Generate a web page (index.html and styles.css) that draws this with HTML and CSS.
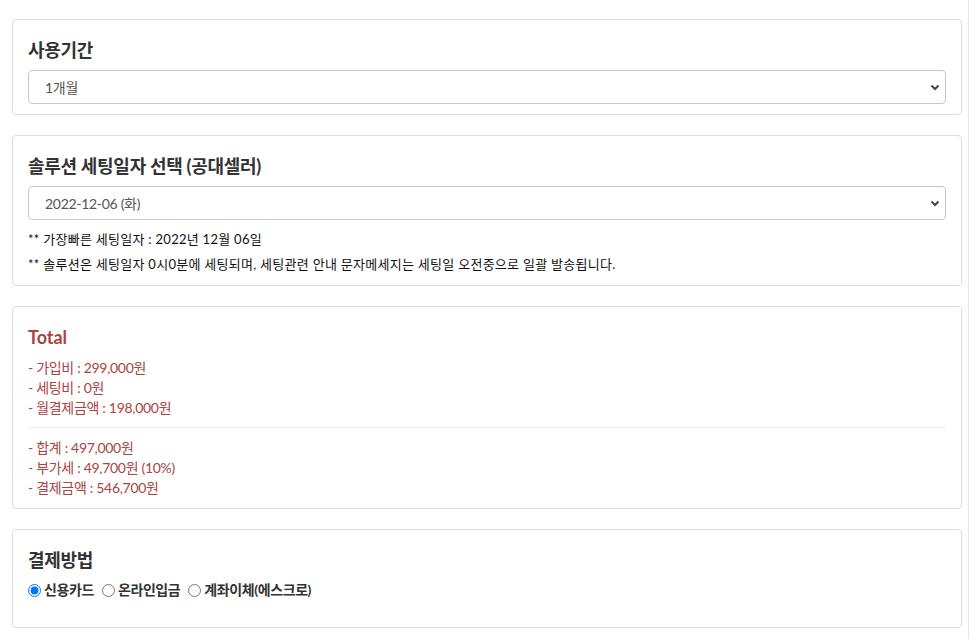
FILE: index.html
```html
<!DOCTYPE html>
<html lang="ko">
<head>
<meta charset="utf-8">
<title>결제</title>
<link rel="stylesheet" href="styles.css">
</head>
<body>
<div class="page">
  <section class="card card-a">
    <h3 class="card-title">사용기간</h3>
    <div class="select-wrap">
      <select class="select">
        <option>1개월</option>
      </select>
      <svg class="chev" width="10" height="7" viewBox="0 0 10 7"><polyline points="1.5,1.5 5,5 8.5,1.5" fill="none" stroke="#444" stroke-width="2"/></svg>
    </div>
  </section>

  <section class="card card-b">
    <h3 class="card-title">솔루션 세팅일자 선택 (공대셀러)</h3>
    <div class="select-wrap">
      <select class="select">
        <option>2022-12-06 (화)</option>
      </select>
      <svg class="chev" width="10" height="7" viewBox="0 0 10 7"><polyline points="1.5,1.5 5,5 8.5,1.5" fill="none" stroke="#444" stroke-width="2"/></svg>
    </div>
    <div class="notes">
      <p class="note">** 가장빠른 세팅일자 : 2022년 12월 06일</p>
      <p class="note">** 솔루션은 세팅일자 0시0분에 세팅되며, 세팅관련 안내 문자메세지는 세팅일 오전중으로 일괄 발송됩니다.</p>
    </div>
  </section>

  <section class="card card-c">
    <h3 class="card-title total-title">Total</h3>
    <ul class="sum">
      <li>- 가입비 : 299,000원</li>
      <li>- 세팅비 : 0원</li>
      <li>- 월결제금액 : 198,000원</li>
    </ul>
    <hr class="divider">
    <ul class="sum">
      <li>- 합계 : 497,000원</li>
      <li>- 부가세 : 49,700원 (10%)</li>
      <li>- 결제금액 : 546,700원</li>
    </ul>
  </section>

  <section class="card card-d">
    <h3 class="card-title">결제방법</h3>
    <div class="radios">
      <label class="radio"><input type="radio" name="pay" checked>신용카드</label>
      <label class="radio"><input type="radio" name="pay">온라인입금</label>
      <label class="radio"><input type="radio" name="pay">계좌이체(에스크로)</label>
    </div>
  </section>
</div>
</body>
</html>
```

FILE: styles.css
```css
* { box-sizing: border-box; }

html, body {
  margin: 0;
  padding: 0;
  background: #fff;
}

body {
  font-family: Lato, "Noto Sans CJK KR", sans-serif;
  font-size: 14px;
  color: #333;
}

.page {
  width: 969px;
  min-height: 639px;
  padding: 19px 6px 1px 12px;
  border-right: 1px solid #e6e6e6;
}

.card {
  border: 1px solid #ddd;
  border-radius: 4px;
  padding: 20px 15px 10px;
  margin-bottom: 20px;
  background: #fff;
}

.card-b { padding-bottom: 8px; }
.card-c { padding-bottom: 10px; }
.card-d { padding-bottom: 27px; }

.card-title {
  margin: 0 0 10px;
  font-size: 18px;
  line-height: 20px;
  font-weight: 700;
  color: #333;
  letter-spacing: -0.3px;
}

.total-title {
  color: #a94442;
  letter-spacing: 0;
  margin-bottom: 11px;
}

.select-wrap {
  position: relative;
}

.select {
  display: block;
  width: 100%;
  height: 34px;
  padding: 0 30px 0 16px;
  border: 1px solid #c8c8c8;
  border-radius: 4px;
  background: #fff;
  font-family: Lato, "Noto Sans CJK KR", sans-serif;
  font-size: 14px;
  color: #555;
  letter-spacing: -0.3px;
  appearance: none;
  -webkit-appearance: none;
  outline: none;
}

.chev {
  position: absolute;
  right: 6px;
  top: 14px;
  pointer-events: none;
}

.notes {
  margin-top: 7px;
}

.note {
  margin: 0;
  font-size: 13px;
  line-height: 25px;
  color: #111;
  letter-spacing: 0.28px;
}

.sum {
  list-style: none;
  margin: 0;
  padding: 0;
}

.sum li {
  font-size: 14px;
  line-height: 20px;
  color: #a94442;
  letter-spacing: -0.3px;
}

.divider {
  border: 0;
  border-top: 1px solid #eee;
  margin: 9px 0 10px;
}

.radios {
  display: flex;
  gap: 8px;
  line-height: 20px;
}

.radio {
  display: flex;
  align-items: center;
  font-size: 14px;
  font-weight: 700;
  color: #333;
  letter-spacing: -0.4px;
}

.radio input {
  margin: 0 3px 0 0;
  width: 13px;
  height: 13px;
}
```
